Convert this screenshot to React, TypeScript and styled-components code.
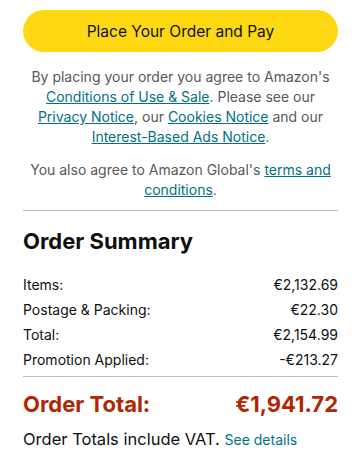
import React from "react";
import styled, { createGlobalStyle } from "styled-components";

const Global = createGlobalStyle`
  html, body { margin: 0; padding: 0; background: #ffffff; }
  body { font-family: Inter, "Noto Sans", Arial, sans-serif; color: #0F1111; }
`;

const Page = styled.div`
  padding: 10px 16px 0 23px;
  display: flex;
  flex-direction: column;
`;

const PayButton = styled.button`
  height: 42px;
  width: 100%;
  border: none;
  border-radius: 21px;
  background: #ffd814;
  color: #0f1111;
  font-family: inherit;
  font-size: 15.5px;
  padding: 0;
  cursor: pointer;
`;

const Notice = styled.p<{ $mt: number }>`
  margin: ${(p) => p.$mt}px 0 0;
  font-size: 14px;
  line-height: 20px;
  color: #565959;
  text-align: center;
`;

const Link = styled.a`
  color: #007185;
  text-decoration: underline;
`;

const Divider = styled.hr<{ $mt: number }>`
  margin: ${(p) => p.$mt}px 0 0;
  border: none;
  border-top: 1px solid #bbbfbf;
  height: 0;
`;

const Heading = styled.h2`
  margin: 14px 0 0;
  font-size: 22px;
  line-height: 32px;
  font-weight: 700;
  color: #0f1111;
`;

const Rows = styled.div`
  margin-top: 15px;
  display: flex;
  flex-direction: column;
`;

const Row = styled.div`
  display: flex;
  justify-content: space-between;
  font-size: 14px;
  line-height: 25px;
  color: #0f1111;
`;

const TotalRow = styled.div`
  margin-top: 12px;
  display: flex;
  justify-content: space-between;
  font-size: 22px;
  line-height: 30px;
  font-weight: 700;
  color: #b12704;
`;

const VatLine = styled.div`
  margin-top: 8px;
  font-size: 16.5px;
  line-height: 24px;
  color: #0f1111;
`;

const SmallLink = styled.a`
  color: #007185;
  font-size: 14px;
  text-decoration: none;
`;

const rows: [string, string][] = [
  ["Items:", "€2,132.69"],
  ["Postage & Packing:", "€22.30"],
  ["Total:", "€2,154.99"],
  ["Promotion Applied:", "-€213.27"],
];

export default function App() {
  return (
    <>
      <Global />
      <Page>
        <PayButton>Place Your Order and Pay</PayButton>
        <Notice $mt={15}>
          By placing your order you agree to Amazon's{" "}
          <Link>Conditions of Use &amp; Sale</Link>. Please see our{" "}
          <Link>Privacy Notice</Link>, our <Link>Cookies Notice</Link> and our{" "}
          <Link>Interest-Based Ads Notice</Link>.
        </Notice>
        <Notice $mt={13}>
          You also agree to Amazon Global's <Link>terms and conditions</Link>.
        </Notice>
        <Divider $mt={10} />
        <Heading>Order Summary</Heading>
        <Rows>
          {rows.map(([k, v]) => (
            <Row key={k}>
              <span>{k}</span>
              <span>{v}</span>
            </Row>
          ))}
        </Rows>
        <Divider $mt={4} />
        <TotalRow>
          <span>Order Total:</span>
          <span>€1,941.72</span>
        </TotalRow>
        <VatLine>
          Order Totals include VAT. <SmallLink>See details</SmallLink>
        </VatLine>
      </Page>
    </>
  );
}
